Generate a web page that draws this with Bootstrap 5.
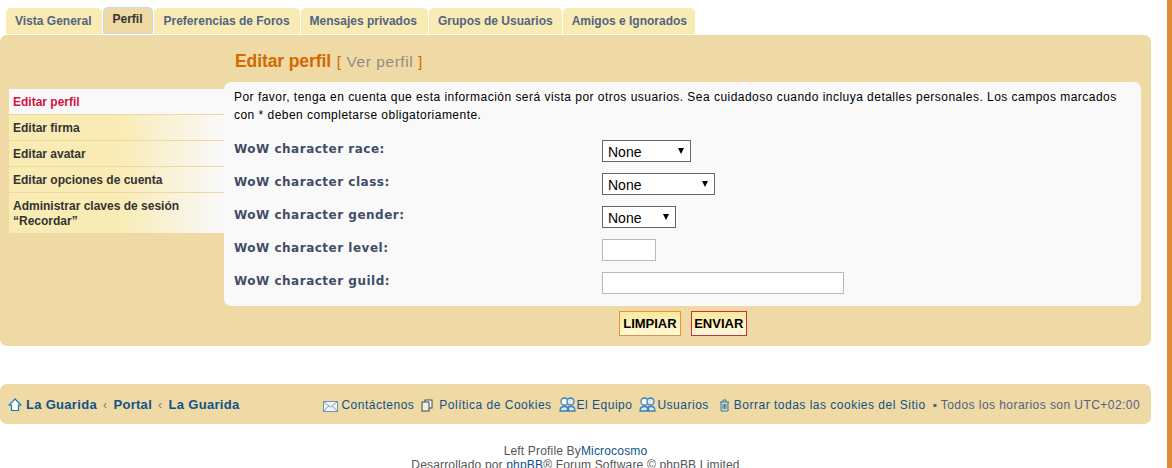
<!DOCTYPE html>
<html lang="es">
<head>
<meta charset="utf-8">
<title>Editar perfil</title>
<link href="https://cdn.jsdelivr.net/npm/bootstrap@5.3.0/dist/css/bootstrap.min.css" rel="stylesheet">
<style>
html,body{height:468px;overflow:hidden;background:#fff}
body{font-family:"Liberation Sans",Arial,sans-serif;font-size:12px;color:#333;position:relative}
.edge-strip{position:absolute;top:0;right:0;bottom:0;width:5px;background:#e08a38}
.page-wrap{width:1151px}
.tab-row{padding:8px 0 0 6px;gap:1px;height:35px}
.tab-item{height:26px;background:#f9ebb4;color:#536482;font-weight:700;font-size:12px;line-height:26px;padding:0 10px 0 9px;border-radius:5px 5px 0 0;text-decoration:none;white-space:nowrap}
.tab-item.is-active{background:#efd9a5;color:#333;border:1px solid #c9d7e6;line-height:23px;padding:0 9px;height:27px;margin-top:-1px}
.tab-item.tab-pref{padding:0 10px}
.tab-item.tab-msg{padding:0 11px 0 9px}
.tab-item.tab-grp,.tab-item.tab-amg{padding:0 9px}
.tab-item.tab-amg{padding-right:8px}
.main-panel{background:#efd9a5;border-radius:7px;height:311px;padding-right:10px;padding-left:9px}
.title-row{height:47px;padding:14px 0 0 226px;font-size:17.500px;line-height:24px;color:#d26a00}
.title-row b{font-weight:700;letter-spacing:-.1px}
.title-row span{font-size:15.500px;letter-spacing:.55px;margin-left:1px}
.title-row a{color:#8f8f80;text-decoration:none}
.side-col{width:215px;padding-top:7px;flex:none}
.side-item{display:block;background:linear-gradient(90deg,#f9ebb4 0,#f9ebb4 50%,#f9f9f9 100%);border-bottom:1px solid #f0d79c;color:#333;font-weight:700;font-size:12px;line-height:15px;padding:6px 5px 4px 4px;text-decoration:none}
.side-item.is-current{background:#f9f9f9;color:#d31141}
.side-item.two-line{border-bottom:0;padding:6px 4px 4px 4px}
.form-box{background:#f9f9f9;border-radius:7px;flex:1;height:224px;padding:6px 10px 0 10px}
.intro-text{font-size:12px;letter-spacing:.47px;line-height:18px;color:#000;margin:0 0 16px;white-space:nowrap}
.field-row{height:33px;display:flex}
.field-label{width:368px;font-family:"DejaVu Sans",sans-serif;font-weight:700;font-size:12px;letter-spacing:.5px;line-height:16px;padding-top:1px;color:#3f4d66;flex:none}
.fake-select{height:22px;border:1px solid #666;background:#fff;position:relative;font-family:"Liberation Sans",sans-serif;font-size:14px;line-height:22px;padding-left:5px;color:#000}
.fake-select::after{content:"";position:absolute;right:6px;top:7px;border:3px solid transparent;border-top:6px solid #000;border-bottom:0}
.fake-input{height:22px;border:1px solid #b4bac0;background:#fff;display:block;padding:0;border-radius:0}
.btn-row{justify-content:center;gap:10px;padding:5px 0 0 0;margin-left:216px}
.act-btn{height:25px;border:1px solid #e69433;background:linear-gradient(180deg,#fbe89c 0,#fff9dc 100%);font-family:"Liberation Sans",sans-serif;font-weight:700;font-size:13px;line-height:22px;color:#000;padding:0 3px;border-radius:0}
.act-btn.is-send{border-color:#c7303d;padding:0 2.500px}
.foot-bar{background:#efd9a5;border-radius:7px;height:40px;margin-top:38px;padding:1px 11px 0 8px;font-size:12px;letter-spacing:.5px;color:#536482}
.foot-bar a{color:#105289;text-decoration:none;white-space:nowrap}
.crumbs a{font-weight:700;font-size:13px;letter-spacing:.3px}
.crumbs i{font-style:normal;color:#6d7f8a;padding:0 6px;font-size:12px}
.foot-links svg{vertical-align:-3px}
.foot-note{letter-spacing:.44px}
.ico-gap-a{margin-right:3px}
.ico-gap-b{margin-right:6px}
.ico-gap-c{margin-right:1px}
.ico-gap-d{margin-right:4px}
.lnk-1,.lnk-2,.lnk-3{margin-right:7px}
.lnk-4{margin-right:10px}
.lnk-5{margin-right:7px}
.credit{text-align:center;font-size:12px;letter-spacing:.17px;line-height:14px;color:#555;padding-top:20px}
.credit a{color:#105289;text-decoration:none}
</style>
</head>
<body>
<div class="edge-strip"></div>
<div class="page-wrap">
  <nav class="tab-row d-flex align-items-start">
    <a class="tab-item" href="#">Vista General</a>
    <a class="tab-item is-active" href="#">Perfil</a>
    <a class="tab-item tab-pref" href="#">Preferencias de Foros</a>
    <a class="tab-item tab-msg" href="#">Mensajes privados</a>
    <a class="tab-item tab-grp" href="#">Grupos de Usuarios</a>
    <a class="tab-item tab-amg" href="#">Amigos e Ignorados</a>
  </nav>
  <section class="main-panel">
    <div class="title-row"><b>Editar perfil</b> <span>[ <a href="#">Ver perfil</a> ]</span></div>
    <div class="d-flex">
      <div class="side-col">
        <a class="side-item is-current" href="#">Editar perfil</a>
        <a class="side-item" href="#">Editar firma</a>
        <a class="side-item" href="#">Editar avatar</a>
        <a class="side-item" href="#">Editar opciones de cuenta</a>
        <a class="side-item two-line" href="#">Administrar claves de sesión “Recordar”</a>
      </div>
      <div class="form-box">
        <p class="intro-text">Por favor, tenga en cuenta que esta información será vista por otros usuarios. Sea cuidadoso cuando incluya detalles personales. Los campos marcados<br>con * deben completarse obligatoriamente.</p>
        <div class="field-row"><div class="field-label">WoW character race:</div><div class="fake-select" style="width:89px">None</div></div>
        <div class="field-row"><div class="field-label">WoW character class:</div><div class="fake-select" style="width:113px">None</div></div>
        <div class="field-row"><div class="field-label">WoW character gender:</div><div class="fake-select" style="width:74px">None</div></div>
        <div class="field-row"><div class="field-label">WoW character level:</div><input class="fake-input" style="width:54px" type="text" aria-label="level"></div>
        <div class="field-row"><div class="field-label">WoW character guild:</div><input class="fake-input" style="width:242px" type="text" aria-label="guild"></div>
      </div>
    </div>
    <div class="d-flex btn-row">
      <button class="act-btn" type="button">LIMPIAR</button>
      <button class="act-btn is-send" type="button">ENVIAR</button>
    </div>
  </section>
  <footer class="foot-bar d-flex align-items-center justify-content-between">
    <div class="crumbs d-flex align-items-center">
      <svg width="14" height="14" viewBox="0 0 14 14" class="me-1"><path d="M7 1 13 7H10.500V12.500H3.500V7H1Z" fill="#fff" stroke="#0a78b5" stroke-width="1.200"/></svg>
      <a href="#">La Guarida</a><i>‹</i><a href="#">Portal</a><i>‹</i><a href="#">La Guarida</a>
    </div>
    <div class="foot-links d-flex align-items-center">
      <a class="lnk-1" href="#"><svg class="ico-gap-a" width="15" height="11" viewBox="0 0 15 11"><rect x=".5" y=".5" width="14" height="10" fill="#f2f2f2" stroke="#6f93b5"/><path d="M1 1 7.500 6 14 1M1 10 5.500 5M14 10 9.500 5" fill="none" stroke="#8aa5bd"/></svg>Contáctenos</a>
      <a class="lnk-2" href="#"><svg class="ico-gap-b" width="12" height="13" viewBox="0 0 12 13"><rect x="4" y="1" width="7" height="8" fill="#fff" stroke="#444"/><rect x="1" y="3" width="7" height="9" fill="#eee" stroke="#444"/></svg>Política de Cookies</a>
      <a class="lnk-3" href="#"><svg class="ico-gap-c" width="17" height="15" viewBox="0 0 17 15"><circle cx="5.500" cy="4.500" r="3.500" fill="#fff" stroke="#3f7fb5" stroke-width="1.300"/><circle cx="11.500" cy="4.500" r="3.500" fill="#dce9f3" stroke="#3f7fb5" stroke-width="1.300"/><path d="M1 14C1 8 10 8 10 14ZM8 14C8 8 16 8 16 14Z" fill="#dce9f3" stroke="#3f7fb5" stroke-width="1.300"/></svg>El Equipo</a>
      <a class="lnk-4" href="#"><svg class="ico-gap-c" width="17" height="15" viewBox="0 0 17 15"><circle cx="5.500" cy="4.500" r="3.500" fill="#fff" stroke="#3f7fb5" stroke-width="1.300"/><circle cx="11.500" cy="4.500" r="3.500" fill="#dce9f3" stroke="#3f7fb5" stroke-width="1.300"/><path d="M1 14C1 8 10 8 10 14ZM8 14C8 8 16 8 16 14Z" fill="#dce9f3" stroke="#3f7fb5" stroke-width="1.300"/></svg>Usuarios</a>
      <a class="lnk-5" href="#"><svg class="ico-gap-d" width="11" height="13" viewBox="0 0 11 13"><path d="M1 3H10M4 3V1H7V3M2 3V12H9V3M4 5V10M5.500 5V10M7 5V10" fill="none" stroke="#2a7ab0"/></svg>Borrar todas las cookies del Sitio</a>
      <span class="foot-note">▪ Todos los horarios son UTC+02:00</span>
    </div>
  </footer>
  <div class="credit">Left Profile By<a href="#">Microcosmo</a><br>Desarrollado por <a href="#">phpBB</a>® Forum Software © phpBB Limited</div>
</div>
</body>
</html>
